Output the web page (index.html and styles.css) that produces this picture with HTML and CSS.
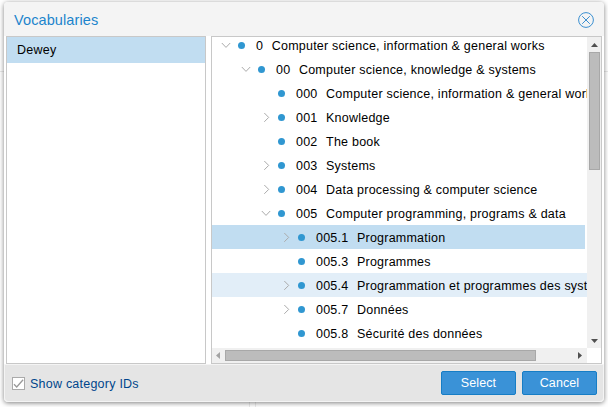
FILE: index.html
```html
<!DOCTYPE html>
<html lang="en">
<head>
<meta charset="utf-8">
<title>Vocabularies</title>
<link rel="stylesheet" href="styles.css">
</head>
<body>
<svg width="0" height="0" class="defs">
  <symbol id="open" viewBox="0 0 10 10"><path d="M.8 3 5 7.4 9.2 3"/></symbol>
  <symbol id="closed" viewBox="0 0 10 10"><path d="M3.3 1 7.7 5.4 3.3 9.8"/></symbol>
</svg>
<div class="dialog">
  <header class="head">
    <h1>Vocabularies</h1>
    <svg class="close" viewBox="0 0 16 16"><circle cx="8" cy="8" r="7.4"/><path d="m4.2 4.2 7.6 7.6m0-7.6-7.6 7.6"/></svg>
  </header>
  <main class="body">
    <nav class="list"><div class="item">Dewey</div></nav>
    <section class="tree">
      <div class="rows">
        <div class="row l0"><svg class="arrow"><use href="#open"/></svg><i class="dot"></i><span class="id">0</span><span>Computer science, information &amp; general works</span></div>
        <div class="row l1"><svg class="arrow"><use href="#open"/></svg><i class="dot"></i><span class="id">00</span><span>Computer science, knowledge &amp; systems</span></div>
        <div class="row l2"><svg class="arrow"></svg><i class="dot"></i><span class="id">000</span><span>Computer science, information &amp; general works</span></div>
        <div class="row l2"><svg class="arrow"><use href="#closed"/></svg><i class="dot"></i><span class="id">001</span><span>Knowledge</span></div>
        <div class="row l2"><svg class="arrow"></svg><i class="dot"></i><span class="id">002</span><span>The book</span></div>
        <div class="row l2"><svg class="arrow"><use href="#closed"/></svg><i class="dot"></i><span class="id">003</span><span>Systems</span></div>
        <div class="row l2"><svg class="arrow"><use href="#closed"/></svg><i class="dot"></i><span class="id">004</span><span>Data processing &amp; computer science</span></div>
        <div class="row l2"><svg class="arrow"><use href="#open"/></svg><i class="dot"></i><span class="id">005</span><span>Computer programming, programs &amp; data</span></div>
        <div class="row l3 selected"><svg class="arrow"><use href="#closed"/></svg><i class="dot"></i><span class="id">005.1</span><span>Programmation</span></div>
        <div class="row l3"><svg class="arrow"></svg><i class="dot"></i><span class="id">005.3</span><span>Programmes</span></div>
        <div class="row l3 hover"><svg class="arrow"><use href="#closed"/></svg><i class="dot"></i><span class="id">005.4</span><span>Programmation et programmes des systèmes</span></div>
        <div class="row l3"><svg class="arrow"><use href="#closed"/></svg><i class="dot"></i><span class="id">005.7</span><span>Données</span></div>
        <div class="row l3"><svg class="arrow"></svg><i class="dot"></i><span class="id">005.8</span><span>Sécurité des données</span></div>
      </div>
      <div class="vbar">
        <svg class="tip" viewBox="0 0 13 15"><path d="M3 10 6.5 6 10 10z"/></svg>
        <div class="vthumb"></div>
        <svg class="tip end" viewBox="0 0 13 15"><path d="M3 6 6.5 10 10 6z"/></svg>
      </div>
      <div class="hbar">
        <svg class="side off" viewBox="0 0 13 15"><path d="M8 4 4 7.5 8 11z"/></svg>
        <div class="hthumb"></div>
        <svg class="side end" viewBox="0 0 13 15"><path d="M4 4 8 7.5 4 11z"/></svg>
      </div>
    </section>
  </main>
  <footer class="foot">
    <svg class="check" viewBox="0 0 13 13"><rect x=".5" y=".5" width="12" height="12"/><path d="m2 7.2 2.7 2.8 6.4-7.2"/></svg>
    <span class="label">Show category IDs</span>
    <button>Select</button>
    <button>Cancel</button>
  </footer>
</div>
<div class="under"></div>
</body>
</html>
```

FILE: styles.css
```css
* { box-sizing: border-box; }
body {
  margin: 0;
  padding: 2px 0 0 4px;
  width: 608px;
  height: 407px;
  overflow: hidden;
  background: linear-gradient(#e9e9e9, #e9e9e9) 0 71px / 100% 1px no-repeat #fff;
  font: 12.5px/24px "Liberation Sans", Arial, sans-serif;
  letter-spacing: .23px;
  color: #000;
}
.defs { position: absolute; }
.dialog {
  width: 600px;
  height: 400px;
  display: flex;
  flex-direction: column;
  background: #fff;
  border-radius: 4px;
  box-shadow: 0 1px 5px rgba(0, 0, 0, .5);
  overflow: hidden;
}
.head {
  height: 34px;
  flex: none;
  display: flex;
  align-items: center;
  justify-content: space-between;
  padding: 2px 10px 0;
  background: #f4f4f4;
}
h1 { margin: 0; font-size: 14.5px; font-weight: 400; letter-spacing: .1px; color: #1c84cc; }
.close { width: 16px; height: 16px; fill: none; stroke: #3b8fd0; stroke-width: 1; }
.body { height: 328px; flex: none; display: flex; gap: 5px; padding: 0 2px; }
.list { width: 200px; flex: none; border: 1px solid #c8c8c8; }
.item { height: 26px; line-height: 27px; padding-left: 10px; background: #c1ddf1; }
.tree {
  width: 391px;
  flex: none;
  display: grid;
  grid-template: 311px 15px / 375px 14px;
  border: 1px solid #c8c8c8;
}
.rows { overflow: hidden; min-width: 0; }
.row { height: 24px; display: flex; align-items: center; white-space: nowrap; }
.row:first-child { margin-top: -4px; }
.row span { padding-top: 1px; }
.l0 { padding-left: 9px; }
.l1 { padding-left: 29px; }
.l2 { padding-left: 49px; }
.l3 { padding-left: 69px; }
.arrow { width: 10px; height: 10px; flex: none; fill: none; stroke: #aaa; stroke-width: 1; }
.dot { width: 7px; height: 7px; flex: none; margin: 0 11px 0 7px; border-radius: 50%; background: #3097d1; }
.id { margin-right: 8.5px; }
.selected { width: 373px; background: #c1ddf1; }
.hover { background: #e2eef8; }
.vbar { display: flex; flex-direction: column; background: #f0f0f0; }
.tip { width: 13px; height: 15px; flex: none; margin-left: 1px; fill: #505050; }
.side { width: 13px; height: 15px; flex: none; fill: #505050; }
.off { fill: #a3a3a3; }
.tip.end { margin-top: auto; }
.vthumb { width: 11px; height: 118px; margin-left: 2px; background: #bcbcbc; border: 1px solid #a8a8a8; }
.hbar { display: flex; background: #f0f0f0; }
.hthumb { width: 311px; height: 11px; margin-top: 2px; background: #bcbcbc; border: 1px solid #a8a8a8; }
.side.end { margin-left: auto; }
.foot {
  flex: 1;
  display: flex;
  align-items: center;
  padding: 0 6px 0 7px;
  background: #e5e5e5;
  border: 1px solid #f4f4f4;
  border-radius: 0 0 4px 4px;
}
.check { width: 13px; height: 13px; fill: #fff; stroke: #aaa; }
.check path { fill: none; stroke: #999; stroke-width: 1.3; }
.label { margin: 0 auto 0 5px; padding-top: 1px; color: #00468c; }
button {
  width: 75px;
  height: 24px;
  margin: 0 0 0 6px;
  padding: 0;
  border: 1px solid #167dc5;
  border-radius: 2px;
  background: #3a92d7;
  color: #fff;
  font: inherit;
  line-height: 22px;
  letter-spacing: .1px;
}
.under {
  width: 7px;
  height: 5px;
  margin-left: 245px;
  border: solid rgba(0, 0, 0, .08);
  border-width: 0 1px;
}
```
